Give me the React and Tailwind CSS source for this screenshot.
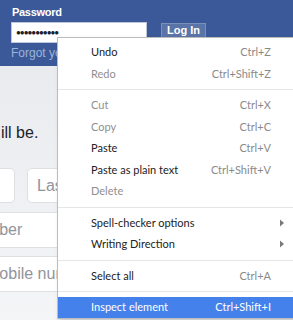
export default function App() {
  const menuFont = { fontFamily: 'Lato, "Noto Sans", sans-serif' };
  const Item = ({ label, shortcut, disabled, arrow, active }) => (
    <div
      className={`flex items-center h-[21.5px] pl-[33px] pr-[25px] text-[11px] ${
        active ? "bg-[#4481eb] text-white" : disabled ? "text-[#8f8f8f]" : "text-[#222]"
      }`}
    >
      <span className="flex-1 whitespace-nowrap">{label}</span>
      {shortcut && (
        <span className={`whitespace-nowrap ${active ? "text-white" : "text-[#8a8a8a]"}`}>{shortcut}</span>
      )}
      {arrow && (
        <svg width="6" height="8" viewBox="0 0 6 8" className="mr-[-14px] ml-2">
          <path d="M1 0.5 L5 4 L1 7.5 Z" fill="#7a7a7a" />
        </svg>
      )}
    </div>
  );
  const Sep = () => <div className="my-[4.5px] h-px bg-[#e6e6e6]" />;

  return (
    <div className="relative w-[293px] h-[320px] overflow-hidden bg-[#eef0f4]" style={{ fontFamily: '"Liberation Sans", Arial, sans-serif' }}>
      {/* header */}
      <div className="h-[66px] bg-[#3b5998] pl-[11px] pt-[5px]">
        <div className="text-[11px] font-bold text-white leading-[14px] pl-[1px] tracking-[-0.3px]">Password</div>
        <div className="flex items-center mt-[3px] gap-[14px]">
          <div className="w-[136px] h-[21px] bg-white border border-[#bdc7d8] flex items-center pl-[4px] text-[#1d2129] text-[8px] tracking-[-1px] leading-none">
            ●●●●●●●●●●●
          </div>
          <div className="h-[15px] px-[5px] bg-[#5b74a8] border border-[#7a8fba] flex items-center text-white font-bold text-[11px] leading-none mt-[-4px]">
            Log In
          </div>
        </div>
        <div className="mt-[1px] text-[#9cb4d8] text-[12px] leading-[18px]">Forgot your password?</div>
      </div>
      {/* body */}
      <div className="bg-gradient-to-b from-[#e9ebee] to-[#f4f5f7] h-[254px]">
        <div className="pt-[57px] text-[16px] text-[#1d2129] ml-[1px] leading-[20px] whitespace-nowrap">ill be.</div>
        <div className="flex gap-[12px] mt-[25px] ml-[-40px]">
          <div className="w-[55px] h-[35px] bg-white border border-[#dddfe2] rounded-[5px]" />
          <div className="w-[200px] h-[35px] bg-white border border-[#dddfe2] rounded-[5px] flex items-center pl-[9px] text-[16px] text-[#90949c]">
            Last name
          </div>
        </div>
        <div className="mt-[9px] ml-[-60px] w-[400px] h-[36px] bg-white border-y border-[#dddfe2] flex items-center pl-[28px] text-[16px] text-[#90949c] whitespace-nowrap">
          number
        </div>
        <div className="mt-[8px] ml-[-60px] w-[400px] h-[36px] bg-white border-y border-[#dddfe2] flex items-center pl-[46px] text-[16px] text-[#90949c] whitespace-nowrap">
          Mobile number
        </div>
      </div>
      {/* context menu overlay */}
      <div
        className="absolute left-[57px] top-[37px] w-[240px] bg-white border border-[#bcbcbc] shadow-[2px_2px_4px_rgba(0,0,0,0.2)] pt-[3.5px]"
        style={menuFont}
      >
        <Item label="Undo" shortcut="Ctrl+Z" />
        <Item label="Redo" shortcut="Ctrl+Shift+Z" disabled />
        <Sep />
        <Item label="Cut" shortcut="Ctrl+X" disabled />
        <Item label="Copy" shortcut="Ctrl+C" disabled />
        <Item label="Paste" shortcut="Ctrl+V" />
        <Item label="Paste as plain text" shortcut="Ctrl+Shift+V" />
        <Item label="Delete" disabled />
        <Sep />
        <Item label="Spell-checker options" arrow />
        <Item label="Writing Direction" arrow />
        <Sep />
        <Item label="Select all" shortcut="Ctrl+A" />
        <Sep />
        <Item label="Inspect element" shortcut="Ctrl+Shift+I" active />
      </div>
    </div>
  );
}
